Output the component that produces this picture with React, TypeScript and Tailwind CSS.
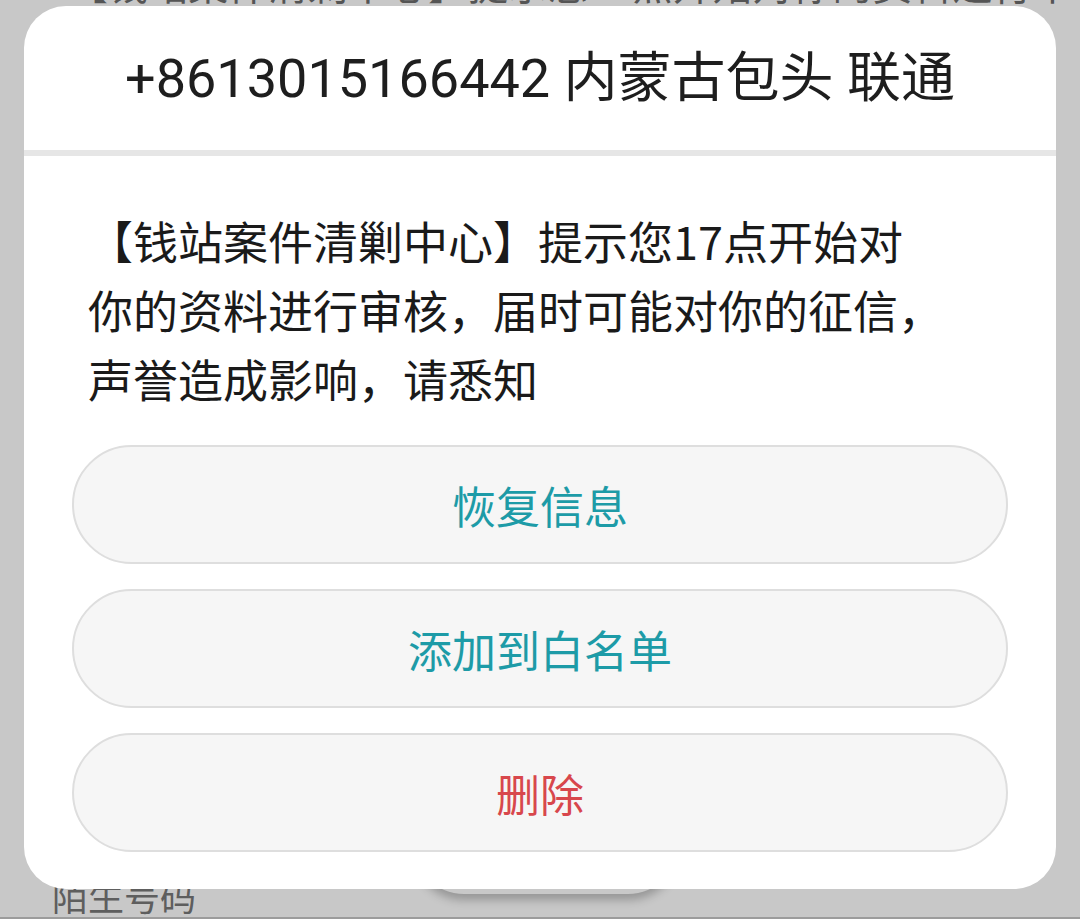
const cjk = '"Noto Sans CJK SC", "Noto Sans", sans-serif';
const titleFont = 'Roboto, "Noto Sans CJK SC", sans-serif';

function ActionButton({ label, tone }: { label: string; tone: "teal" | "red" }) {
  return (
    <button
      className={`flex h-[119px] w-full items-center justify-center rounded-full border-2 border-[#dedede] bg-[#f6f6f6] text-[44px] ${
        tone === "red" ? "text-[#d8474c]" : "text-[#1d9ba7]"
      }`}
    >
      {label}
    </button>
  );
}

export default function App() {
  return (
    <div className="relative h-[919px] w-[1080px] overflow-hidden bg-[#c8c8c8]" style={{ fontFamily: cjk }}>
      {/* dimmed page behind the dialog */}
      <div className="flex h-full flex-col justify-between">
        <p className="-mt-[37px] pl-[68px] text-[40px] leading-[40px] text-[#555555]">【钱站案件清剿中心】提示您17点开始对你的资料进行审核</p>
        <div className="flex items-end">
          <p className="mb-[4px] pl-[52px] text-[36px] leading-[40px] text-[#5e5e5e]">陌生号码</p>
        </div>
      </div>
      <div className="absolute left-[412px] top-[790px] h-[104px] w-[268px] rounded-full bg-[#c8c8c8] shadow-[0_6px_10px_rgba(0,0,0,0.25)]" />
      <div className="absolute bottom-0 left-0 h-[2px] w-full bg-[#9c9c9c]" />

      {/* dialog */}
      <div className="absolute left-[24px] top-[6px] flex h-[883px] w-[1032px] flex-col overflow-hidden rounded-[42px] bg-white">
        <div className="flex h-[144px] items-center justify-center pt-[2px]">
          <h1 className="text-[54px] leading-[64px] text-[#1e1e1e]" style={{ fontFamily: titleFont }}>
            +8613015166442 内蒙古包头 联通
          </h1>
        </div>
        <div className="h-[6px] bg-[#e6e6e6]" />
        <div className="flex flex-col px-[48px] pt-[50px]">
          <p className="pl-[16px] text-[45px] leading-[69px] text-[#1a1a1a]">
            【钱站案件清剿中心】提示您17点开始对
            <br />
            你的资料进行审核，届时可能对你的征信，
            <br />
            声誉造成影响，请悉知
          </p>
          <div className="mt-[32px] flex flex-col gap-[25px]">
            <ActionButton label="恢复信息" tone="teal" />
            <ActionButton label="添加到白名单" tone="teal" />
            <ActionButton label="删除" tone="red" />
          </div>
        </div>
      </div>
    </div>
  );
}
